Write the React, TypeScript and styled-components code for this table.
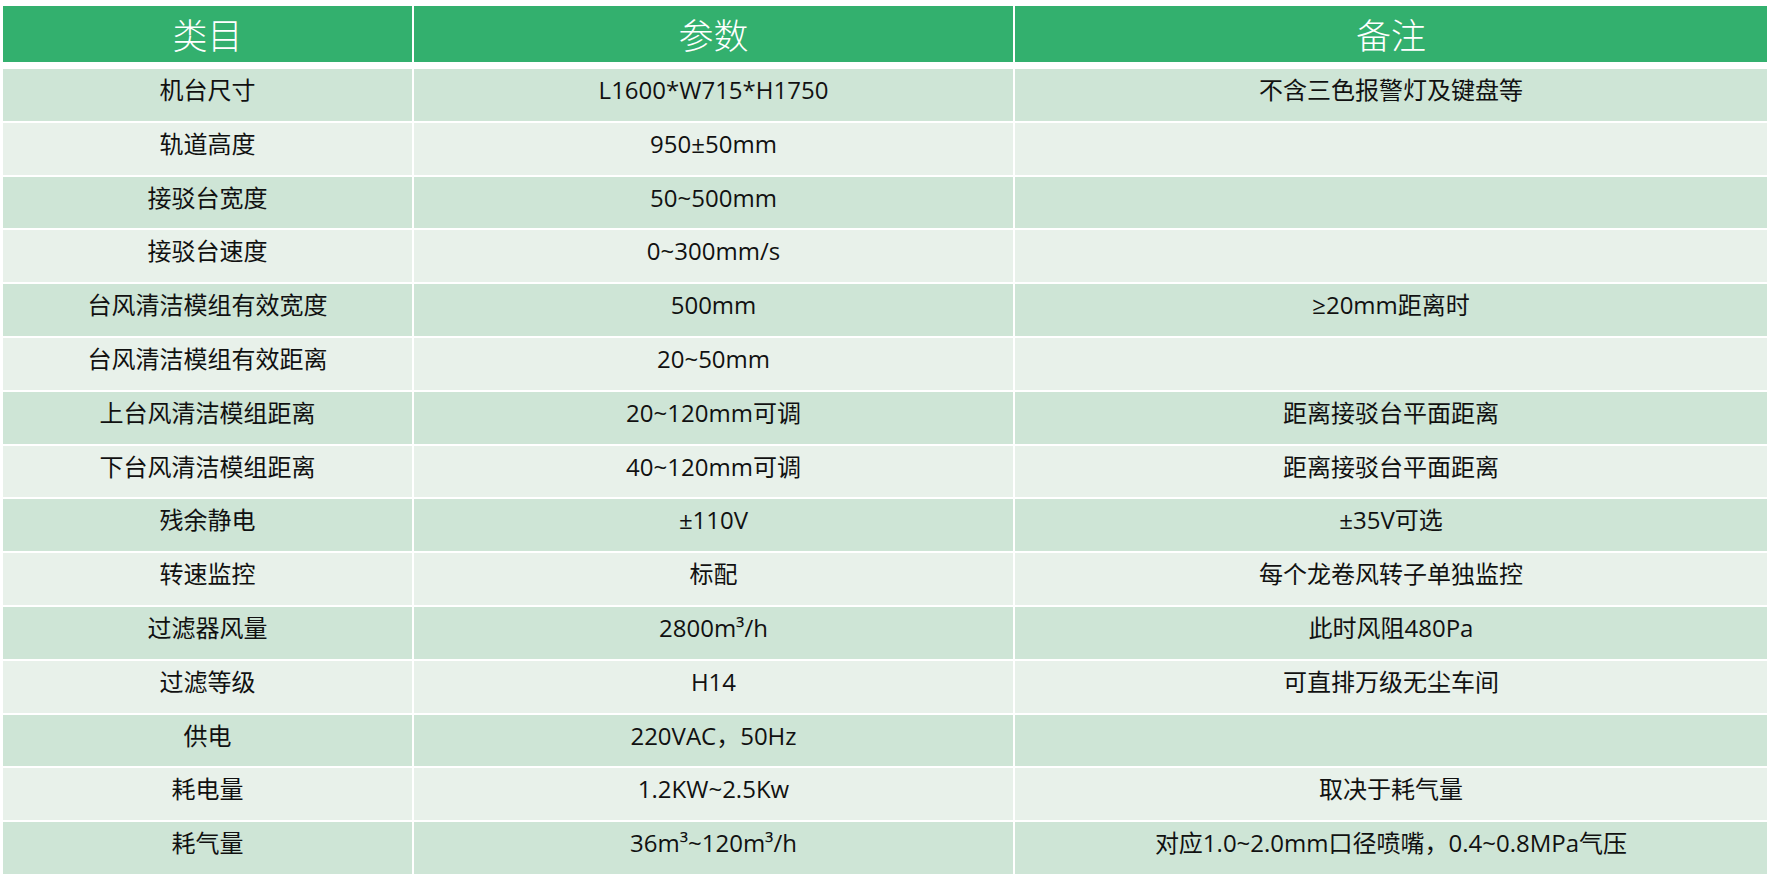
import React from "react";
import styled, { createGlobalStyle } from "styled-components";

const colors = {
  head: "#33b06e",
  odd: "#cee5d6",
  even: "#e8f1ea",
  text: "#111111",
};

const GlobalStyle = createGlobalStyle`
  html, body {
    margin: 0;
    padding: 0;
    background: #ffffff;
  }
  body {
    font-family: "Open Sans", "Noto Sans CJK SC", sans-serif;
  }
`;

const Page = styled.div`
  padding: 6px 0 0 3px;
`;

const Table = styled.div`
  display: flex;
  flex-direction: column;
  gap: 2px;
  width: 1764px;
`;

const Grid = styled.div`
  display: grid;
  grid-template-columns: 409px 599px 752px;
  column-gap: 2px;
`;

const HeadRow = styled(Grid)`
  height: 56px;
  margin-bottom: 5px;
`;

const HeadCell = styled.div`
  background: ${colors.head};
  color: #ffffff;
  font-family: "Noto Sans CJK SC", sans-serif;
  font-size: 35px;
  font-weight: 300;
  display: flex;
  align-items: center;
  justify-content: center;
  padding-bottom: 2px;
`;

const BodyRow = styled(Grid)<{ $odd: boolean }>`
  height: 51.8px;
  > div {
    background: ${(props) => (props.$odd ? colors.odd : colors.even)};
  }
`;

const Cell = styled.div`
  color: ${colors.text};
  font-size: 24px;
  line-height: 32px;
  display: flex;
  justify-content: center;
  align-items: flex-start;
  padding-top: 5px;
  white-space: nowrap;
`;

type Row = [string, string, string];

const rows: Row[] = [
  ["机台尺寸", "L1600*W715*H1750", "不含三色报警灯及键盘等"],
  ["轨道高度", "950±50mm", ""],
  ["接驳台宽度", "50~500mm", ""],
  ["接驳台速度", "0~300mm/s", ""],
  ["台风清洁模组有效宽度", "500mm", "≥20mm距离时"],
  ["台风清洁模组有效距离", "20~50mm", ""],
  ["上台风清洁模组距离", "20~120mm可调", "距离接驳台平面距离"],
  ["下台风清洁模组距离", "40~120mm可调", "距离接驳台平面距离"],
  ["残余静电", "±110V", "±35V可选"],
  ["转速监控", "标配", "每个龙卷风转子单独监控"],
  ["过滤器风量", "2800m³/h", "此时风阻480Pa"],
  ["过滤等级", "H14", "可直排万级无尘车间"],
  ["供电", "220VAC，50Hz", ""],
  ["耗电量", "1.2KW~2.5Kw", "取决于耗气量"],
  ["耗气量", "36m³~120m³/h", "对应1.0~2.0mm口径喷嘴，0.4~0.8MPa气压"],
];

const App = () => {
  return (
    <Page>
      <GlobalStyle />
      <Table>
        <HeadRow>
          <HeadCell>类目</HeadCell>
          <HeadCell>参数</HeadCell>
          <HeadCell>备注</HeadCell>
        </HeadRow>
        {rows.map(([name, value, note], idx) => (
          <BodyRow key={idx} $odd={idx % 2 === 0}>
            <Cell>{name}</Cell>
            <Cell>{value}</Cell>
            <Cell>{note}</Cell>
          </BodyRow>
        ))}
      </Table>
    </Page>
  );
};

export default App;
